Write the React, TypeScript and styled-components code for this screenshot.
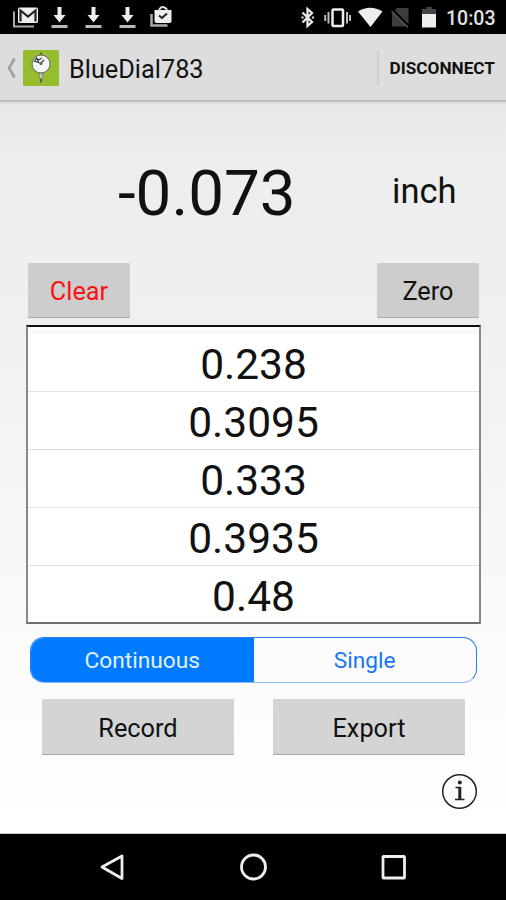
import React from 'react';
import styled, { createGlobalStyle } from 'styled-components';

const GlobalStyle = createGlobalStyle`
  *, *::before, *::after { box-sizing: border-box; }
  body { margin: 0; font-family: Roboto, "Liberation Sans", sans-serif; background: #000; }
  button { font-family: inherit; margin: 0; padding: 0; cursor: pointer; }
  svg { display: block; flex: none; }
`;

const Screen = styled.div`
  width: 506px;
  height: 900px;
  display: flex;
  flex-direction: column;
  overflow: hidden;
  color: #111;
`;

const StatusBar = styled.header`
  height: 34px;
  flex: none;
  background: #000;
  display: flex;
  justify-content: space-between;
`;

const ActionBar = styled.div`
  height: 68px;
  flex: none;
  background: #dddddd;
  border-bottom: 2px solid #bebebe;
  display: flex;
  align-items: center;
  padding: 2px 11px 0 6px;
`;

const HomeButton = styled.button`
  display: flex;
  align-items: center;
  gap: 6px;
  border: 0;
  background: none;
`;

const Title = styled.h1`
  margin: 0 0 0 10px;
  padding-top: 3px;
  font-size: 25.3px;
  font-weight: 400;
  line-height: 34px;
  flex: 1;
`;

const ActionButton = styled.button`
  height: 34px;
  border: 0;
  border-left: 2px solid #cfcfcf;
  padding-left: 11px;
  background: none;
  color: #111;
  font-size: 17.2px;
  font-weight: 700;
`;

const Content = styled.main`
  height: 732px;
  flex: none;
  background: linear-gradient(#dedede, #e8e8e8 4px, #ededed 8%, #f0f0f0 30%, #fbfbfb 75%, #ffffff);
  border-bottom: 1px solid #c8c8c8;
  display: flex;
  flex-direction: column;
`;

const Reading = styled.div`
  height: 161px;
  flex: none;
  display: grid;
  grid-template-columns: 344px 160px;
  padding-top: 54px;
`;

const Value = styled.div`
  font-size: 63.7px;
  line-height: 75px;
  padding-left: 118px;
`;

const Unit = styled.div`
  font-size: 34.5px;
  line-height: 71px;
  padding-left: 48px;
`;

const ButtonRow = styled.div<{ $inset: number; $gap?: number }>`
  display: flex;
  justify-content: space-between;
  margin-top: ${(p) => p.$gap ?? 0}px;
  padding: 0 ${(p) => p.$inset - 1}px 0 ${(p) => p.$inset}px;
`;

const GrayButton = styled.button<{ $width: number; $danger?: boolean; $low?: boolean }>`
  width: ${(p) => p.$width}px;
  height: ${(p) => (p.$low ? 56 : 55)}px;
  padding-top: ${(p) => (p.$low ? 4 : 2)}px;
  border: 0;
  border-bottom: 1.5px solid #a9a9a9;
  border-radius: 1px;
  background: ${(p) => (p.$low ? '#d4d4d4' : '#cdcdcd')};
  color: ${(p) => (p.$danger ? '#f91414' : '#111')};
  font-size: 25.3px;
`;

const Log = styled.ul`
  list-style: none;
  margin: 7px 25px 0 26px;
  padding: 0;
  height: 299px;
  flex: none;
  background: #fff;
  border: 2px solid #888;
  border-top-color: #111;
  border-bottom-color: #707070;
  overflow: hidden;
`;

const ListEdge = styled.li`
  height: 7px;
  margin-left: 3px;
  border-bottom: 4px solid #f8f8f8;
`;

const LogItem = styled.li`
  height: 58px;
  border-bottom: 1px solid #e0e0e0;
  font-size: 42.5px;
  line-height: 62px;
  text-align: center;
`;

const Segments = styled.div`
  margin: 13px 29px 0 30px;
  height: 46px;
  flex: none;
  display: flex;
  border: 1px solid #2a7fef;
  border-bottom-color: #8fb9fa;
  border-radius: 14px;
  overflow: hidden;
`;

const Segment = styled.button<{ $active?: boolean }>`
  flex: 1;
  border: 0;
  padding-top: 1px;
  background: ${(p) => (p.$active ? '#007aff' : 'transparent')};
  color: ${(p) => (p.$active ? '#e3f0ff' : '#1877f2')};
  font-size: 22.7px;
`;

const Footer = styled.div`
  display: flex;
  justify-content: flex-end;
  padding: 18px 28px 0 0;
`;

const NavBar = styled.nav`
  height: 66px;
  flex: none;
  background: #000;
  display: flex;
  align-items: center;
  justify-content: center;
  gap: 104px;
`;

const readings = ['0.238', '0.3095', '0.333', '0.3935', '0.48'];

const StatusLeft = () => (
  <svg width="190" height="34" viewBox="0 0 190 34" fill="none">
    <path d="M14 11.500v15h20" stroke="#aaa" strokeWidth="2" />
    <rect x="18" y="7.500" width="20" height="15.500" rx="1.500" fill="#eee" />
    <path d="M20.500 21.500V10.500l7.500 6 7.500-6v11" stroke="#222" strokeWidth="2.200" />
    {[59.5, 93.5, 127.5].map((x) => (
      <g key={x} fill="#eee">
        <path d={`M${x - 2} 7h4v8h4l-6 7.500-6-7.500h4z`} />
        <rect x={x - 8} y="25" width="16" height="3" fill="#bbb" />
      </g>
    ))}
    <path d="M151.500 14v11.500h16" stroke="#aaa" strokeWidth="2.500" />
    <path d="M154.500 10h17v11q0 2-2 2h-13q-2 0-2-2z" fill="#eee" />
    <path d="M159.500 11V9q3-4 7 0v2" stroke="#ddd" strokeWidth="2" />
    <path d="M159 15.500l3 2.500 5-4.500" stroke="#222" strokeWidth="2" />
  </svg>
);

const StatusRight = () => (
  <svg width="216" height="34" viewBox="290 0 216 34" fill="none">
    <path d="M302.500 12.500l9.500 9.500-4.500 4V9l4.500 4-9.500 9.500" stroke="#e8e8e8" strokeWidth="2.300" />
    <g fill="#ccc">
      <circle cx="302.500" cy="17.500" r="1.200" />
      <circle cx="313" cy="17.500" r="1.200" />
    </g>
    <rect x="332.500" y="9.500" width="10.500" height="16.500" rx="1" stroke="#eee" strokeWidth="2.500" />
    <path d="M328.500 12v11.500M347 12v11.500M325.200 15v6M350 15v6" stroke="#bbb" strokeWidth="2" />
    <path d="M358 11.500Q370 4 382.500 11.500L370.500 27z" fill="#eee" />
    <path d="M397 8h11.500v18.500H392V13z" fill="#3c3c3c" />
    <path d="M391 8.500l18.500 18.500" stroke="#000" strokeWidth="2.500" />
    <path d="M391.500 11l16.500 16.500" stroke="#555" strokeWidth="1.500" />
    <path d="M422 9h4V7h6v2h4v6h-14z" fill="#444" />
    <rect x="422" y="14" width="14" height="13.500" fill="#eee" />
    <text x="446" y="25" fill="#e0e0e0" fontSize="19.500" fontWeight="500" fontFamily="Roboto, sans-serif">10:03</text>
  </svg>
);

const BackChevron = () => (
  <svg width="11" height="22" viewBox="0 0 11 22" fill="none">
    <path d="M8.500 1.500L3 11l5.500 9.500" stroke="#a0a0a0" strokeWidth="2.800" />
  </svg>
);

const AppLogo = () => (
  <svg width="36" height="36" viewBox="0 0 36 36">
    <rect width="36" height="36" rx="1.500" fill="#96bd2e" />
    <path d="M18 2.500v30" stroke="#555" strokeWidth="1.800" />
    <path d="M18 23v6" stroke="#888" strokeWidth="3.500" />
    <path d="M18 24v4" stroke="#ddd" strokeWidth="1.500" />
    <circle cx="18" cy="14" r="9" fill="#f5f5f5" stroke="#666" strokeWidth="1" />
    <path d="M11 12l2.500-4 2 2 3.500-2M11.500 11l5 2M14 9l2 4M17 14l4-4" stroke="#444" strokeWidth="1.300" fill="none" />
    <circle cx="18" cy="13.500" r="1.500" fill="#666" />
  </svg>
);

const InfoIcon = () => (
  <svg width="37" height="37" viewBox="0 0 37 37" fill="none">
    <circle cx="18.500" cy="18.500" r="16.800" stroke="#222" strokeWidth="1.500" />
    <circle cx="18.800" cy="9.500" r="2" fill="#222" />
    <path d="M14.500 14.500h5M14 26.500h9.500" stroke="#222" strokeWidth="1.700" />
    <path d="M18.800 14v12.500" stroke="#222" strokeWidth="3" />
  </svg>
);

export default function App() {
  return (
    <Screen>
      <GlobalStyle />
      <StatusBar>
        <StatusLeft />
        <StatusRight />
      </StatusBar>
      <ActionBar>
        <HomeButton aria-label="Back">
          <BackChevron />
          <AppLogo />
        </HomeButton>
        <Title>BlueDial783</Title>
        <ActionButton>DISCONNECT</ActionButton>
      </ActionBar>
      <Content>
        <Reading>
          <Value>-0.073</Value>
          <Unit>inch</Unit>
        </Reading>
        <ButtonRow $inset={28}>
          <GrayButton $width={102} $danger>Clear</GrayButton>
          <GrayButton $width={102}>Zero</GrayButton>
        </ButtonRow>
        <Log>
          <ListEdge />
          {readings.map((r) => (
            <LogItem key={r}>{r}</LogItem>
          ))}
        </Log>
        <Segments>
          <Segment $active>Continuous</Segment>
          <Segment>Single</Segment>
        </Segments>
        <ButtonRow $inset={42} $gap={16}>
          <GrayButton $width={192} $low>Record</GrayButton>
          <GrayButton $width={192} $low>Export</GrayButton>
        </ButtonRow>
        <Footer>
          <InfoIcon />
        </Footer>
      </Content>
      <NavBar>
        <svg width="36" height="36" viewBox="0 0 36 36" fill="none">
          <path d="M27 7v22.500L7 18z" stroke="#eee" strokeWidth="2.800" strokeLinejoin="round" />
        </svg>
        <svg width="36" height="36" viewBox="0 0 36 36" fill="none">
          <circle cx="18.500" cy="18" r="12" stroke="#eee" strokeWidth="2.800" />
        </svg>
        <svg width="36" height="36" viewBox="0 0 36 36" fill="none">
          <rect x="8" y="7.500" width="21.500" height="21.500" rx="0.500" stroke="#eee" strokeWidth="2.800" />
        </svg>
      </NavBar>
    </Screen>
  );
}
